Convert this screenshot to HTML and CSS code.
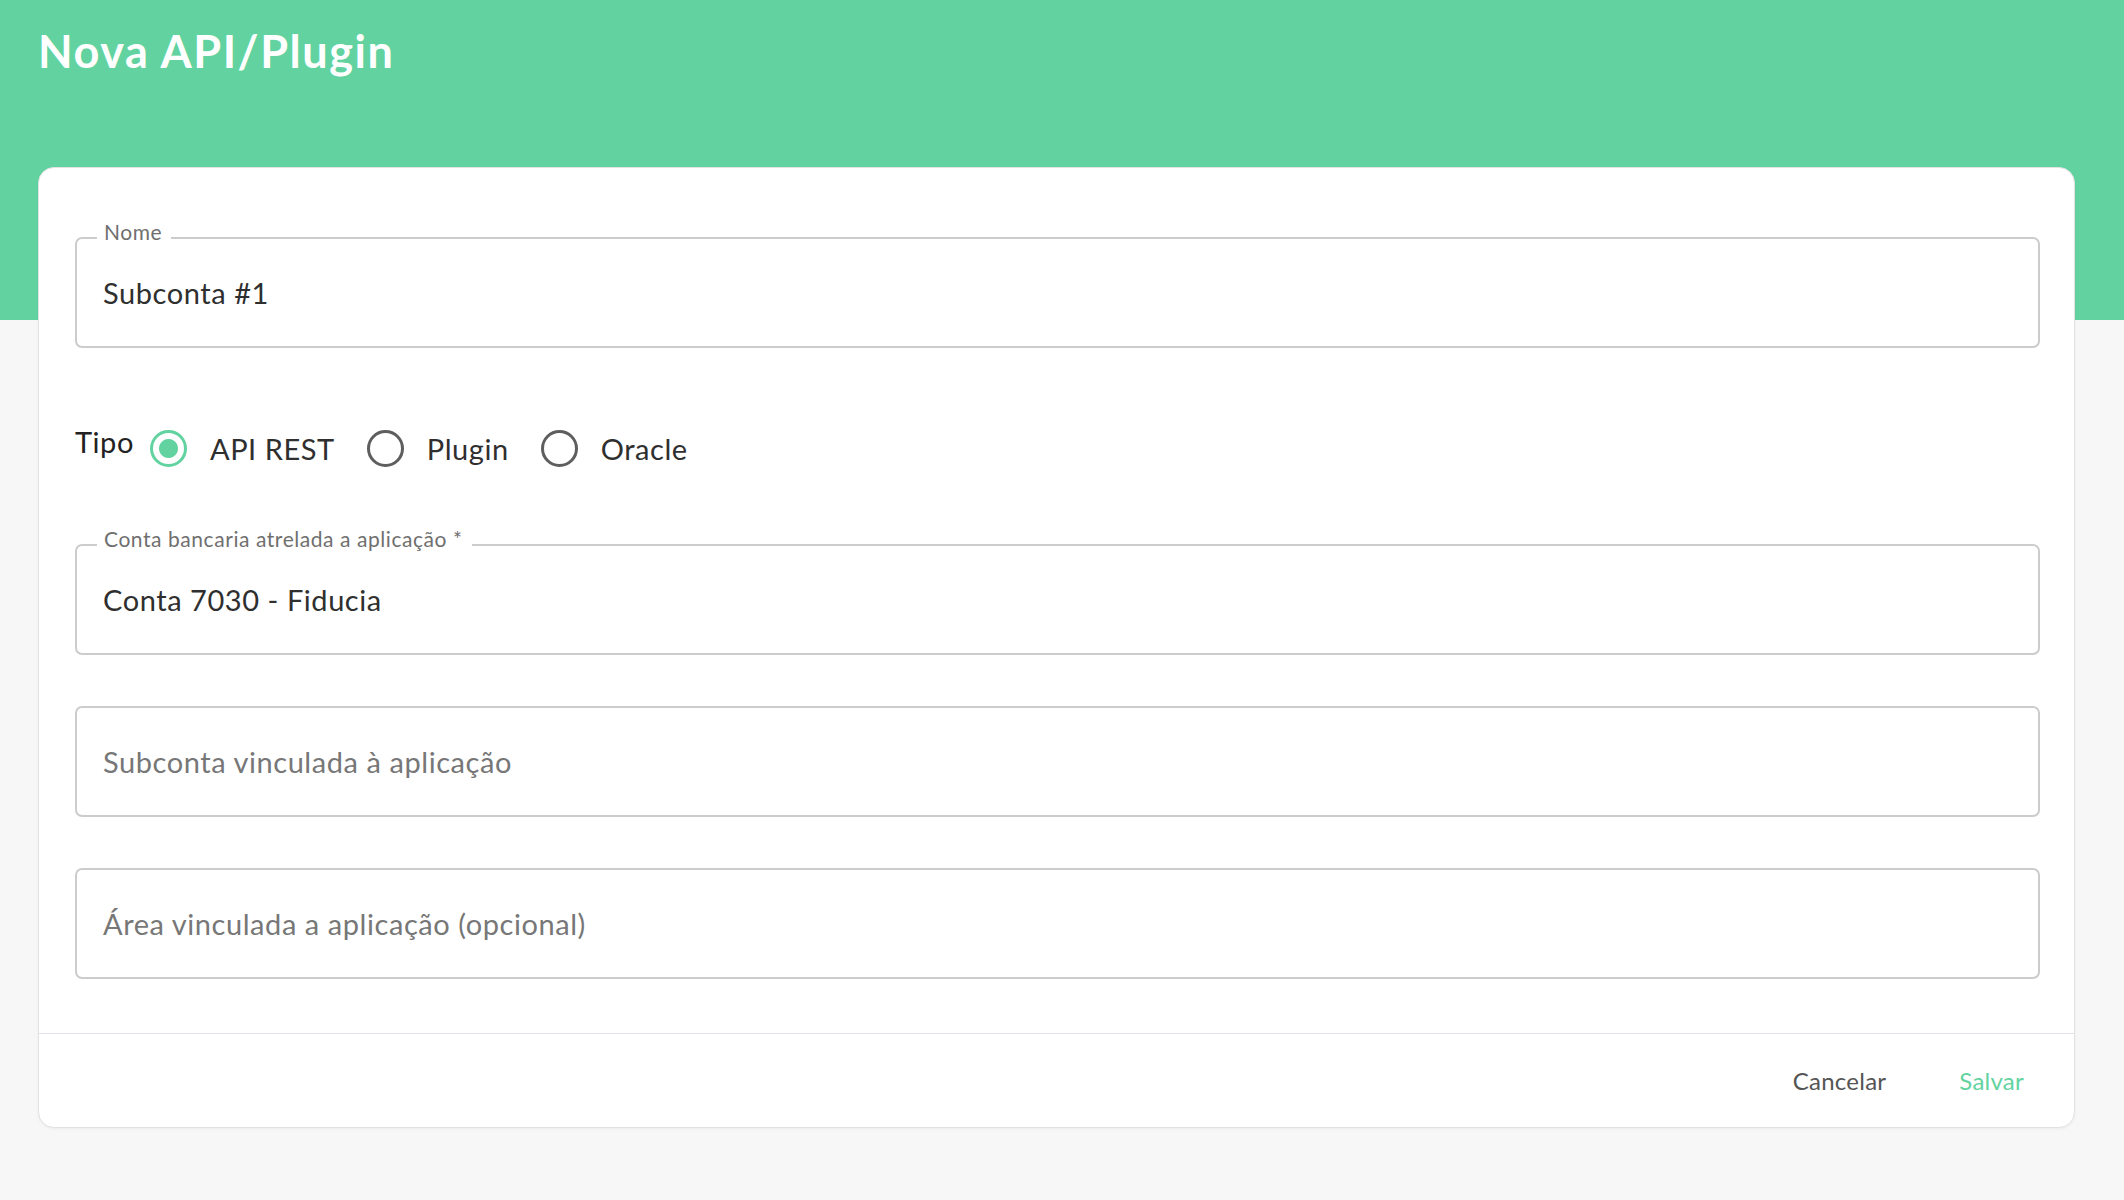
FILE: index.html
```html
<!DOCTYPE html>
<html lang="pt-BR">
<head>
    <meta charset="UTF-8">
    <meta name="viewport" content="width=device-width, initial-scale=1.0">
    <title>Nova API/Plugin</title>
    <link rel="stylesheet" href="styles.css">
</head>
<body>
    <div class="page">
        <h1 class="page-title">Nova API/Plugin</h1>

        <div class="card">
            <div class="card-body">
                <div class="field">
                    <span class="field-label">Nome</span>
                    <span class="field-value">Subconta #1</span>
                </div>

                <div class="type-row">
                    <span class="type-label">Tipo</span>
                    <div class="radio-group">
                        <label class="radio-option">
                            <span class="radio checked"></span>
                            <span class="radio-text">API REST</span>
                        </label>
                        <label class="radio-option">
                            <span class="radio"></span>
                            <span class="radio-text">Plugin</span>
                        </label>
                        <label class="radio-option">
                            <span class="radio"></span>
                            <span class="radio-text">Oracle</span>
                        </label>
                    </div>
                </div>

                <div class="field">
                    <span class="field-label">Conta bancaria atrelada a aplicação *</span>
                    <span class="field-value">Conta 7030 - Fiducia</span>
                </div>

                <div class="field spaced">
                    <span class="field-placeholder">Subconta vinculada à aplicação</span>
                </div>

                <div class="field spaced">
                    <span class="field-placeholder">Área vinculada a aplicação (opcional)</span>
                </div>
            </div>

            <div class="card-footer">
                <button class="btn btn-cancel">Cancelar</button>
                <button class="btn btn-save">Salvar</button>
            </div>
        </div>
    </div>
</body>
</html>
```

FILE: styles.css
```css
body {
    margin: 0;
    min-height: 1200px;
    background: linear-gradient(#62d3a0 0, #62d3a0 320px, #f7f7f7 320px);
    font-family: Lato, "Open Sans", Arial, sans-serif;
    color: #333333;
    letter-spacing: 0.035em;
}

.page {
    padding: 24px 49px 0 38px;
}

.page-title {
    margin: 0;
    font-size: 45px;
    line-height: 54px;
    font-weight: 700;
    letter-spacing: 0.035em;
    color: #ffffff;
}

.card {
    margin-top: 89px;
    background: #ffffff;
    border: 1px solid #e2e2e2;
    border-radius: 16px;
    box-shadow: 0 1px 3px rgba(0, 0, 0, 0.05);
}

.card-body {
    padding: 69px 34px 54px 36px;
}

.field {
    position: relative;
    height: 111px;
    box-sizing: border-box;
    border: 2px solid #cccccc;
    border-radius: 7px;
    padding: 0 26px;
    display: flex;
    align-items: center;
}

.field.spaced {
    margin-top: 51px;
}

/* rótulo sobre a borda do campo */
.field-label {
    position: absolute;
    top: -20px;
    left: 20px;
    padding: 0 9px 0 7px;
    background: #ffffff;
    font-size: 21px;
    line-height: 26px;
    color: #6f6f6f;
}

.field-value {
    font-size: 29px;
    color: #2f2f2f;
}

.field-placeholder {
    font-size: 29px;
    color: #777777;
}

.type-row {
    height: 196px;
    display: flex;
    align-items: center;
}

.type-label {
    font-size: 29px;
    color: #222222;
    margin-bottom: 10px;
    margin-right: 16px;
}

.radio-group {
    display: flex;
    align-items: center;
    gap: 32px;
    margin-top: 4px;
}

.radio-option {
    display: flex;
    align-items: center;
    gap: 23px;
    cursor: pointer;
}

.radio {
    width: 37px;
    height: 37px;
    box-sizing: border-box;
    border: 3.5px solid #5e5e5e;
    border-radius: 50%;
}

.radio.checked {
    border-color: #62d3a0;
    background: radial-gradient(circle, #62d3a0 0, #62d3a0 9px, transparent 10px);
}

.radio-text {
    font-size: 29px;
    color: #2f2f2f;
}

.card-footer {
    border-top: 1px solid #e0e4e8;
    height: 93px;
    display: flex;
    align-items: center;
    justify-content: flex-end;
    gap: 33px;
    padding-right: 30px;
}

.btn {
    background: none;
    border: none;
    padding: 10px 20px;
    font-family: inherit;
    font-size: 24px;
    letter-spacing: 0.01em;
    cursor: pointer;
}

.btn-cancel {
    color: #555555;
}

.btn-save {
    color: #62d3a0;
}
```
